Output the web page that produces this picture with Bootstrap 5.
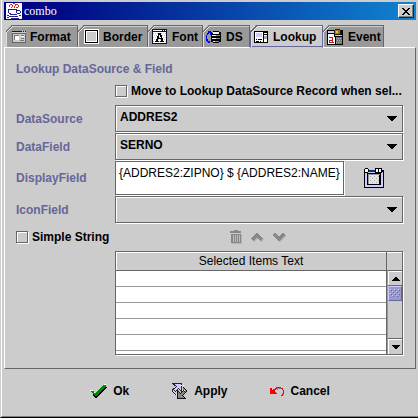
<!DOCTYPE html>
<html lang="en">
<head>
<meta charset="utf-8">
<meta name="viewport" content="width=device-width, initial-scale=1">
<title>combo</title>
<link href="https://cdn.jsdelivr.net/npm/bootstrap@5.3.0/dist/css/bootstrap.min.css" rel="stylesheet">
<style>
:root { --face: #ccc; --edge: #666; --ink: #669; --shade: #999; }
body { background: var(--face); color: #000; font: 700 12px/16px "Liberation Sans", Arial, sans-serif; }
svg { display: block; flex: none; shape-rendering: crispEdges; }
button, select, input, textarea { font: inherit; color: inherit; border-radius: 0; }
.dialog { min-height: 100vh; border-left: 1px solid var(--face); border-bottom: 1px solid #000; }
.frame { border-left: 1px solid #fff; border-bottom: 1px solid #808080; padding: 2px 2px 0; }
.titlebar { height: 18px; gap: 2px; background: linear-gradient(90deg, #000080 0%, #000c88 15%, #1084d0 100%); color: #fff; font: 400 12px/18px "Liberation Serif", serif; padding: 0 2px; }
.close-btn { width: 16px; height: 14px; padding: 0; background: var(--face); border: 1px solid; border-color: #fff #222 #222 #fff; box-shadow: inset -1px -1px 0 #808080; }
.tabs { padding: 5px 0 0 2px; }
.tab { position: relative; height: 22px; padding: 0 0 0 6px; gap: 4px; background: var(--shade); border: 0; border-top: 1px solid var(--edge); border-right: 1px solid var(--edge); box-shadow: inset 0 1px 0 var(--face); clip-path: polygon(0 6px, 6px 0, 100% 0, 100% 100%, 0 100%); white-space: nowrap; }
.tab::before { content: ""; position: absolute; left: 0; top: -1px; width: 7px; height: 7px; background: linear-gradient(135deg, transparent 42%, var(--edge) 42% 53%, #eee 53% 64%, transparent 64%); }
.tab::after { content: ""; position: absolute; left: 0; top: 6px; bottom: 0; width: 1px; background: #ddd; }
.tab.active { height: 23px; margin-bottom: -1px; background: var(--face); border: 1px solid var(--ink); border-top-color: var(--edge); border-bottom-color: var(--face); box-shadow: inset 0 1px 0 #fff, inset 1px 0 0 #fff, inset 0 -1px 0 var(--ink); }
.t-format { width: 72px; } .t-border { width: 70px; } .t-font { width: 55px; } .t-ds { width: 47px; } .t-lookup { width: 73px; } .t-event { width: 61px; }
.tab.t-font, .tab.t-event { padding-left: 4px; gap: 5px; }
.tab.t-ds, .tab.t-lookup { padding-left: 3px; gap: 5px; }
.panel { border: 1px solid; border-color: #fff var(--edge) var(--edge) #fff; padding: 13px 12px 13px 11px; }
.ink { color: var(--ink); }
.option-row { margin: 6px 0 6px 99px; gap: 4px; }
.form-rows { display: grid; grid-template-columns: 99px minmax(0, 1fr); row-gap: 1px; align-items: center; }
.bevel { border: 1px solid var(--edge); box-shadow: inset 1px 1px 0 #fff, 1px 1px 0 #fff; }
.combo { position: relative; }
.combo select { display: block; width: 100%; height: 27px; appearance: none; background: var(--face); padding: 0 24px 3px 4px; }
.combo svg { position: absolute; right: 6px; top: 11px; pointer-events: none; }
.tick { appearance: none; flex: none; width: 12px; height: 12px; margin: 0; background: var(--face); }
.display { display: block; width: 229px; height: 34px; padding: 3px; font-weight: 400; line-height: 16px; resize: none; overflow: hidden; white-space: nowrap; background: #fff; }
.plain-btn { display: flex; align-items: center; padding: 0; border: 0; background: none; }
.string-row { padding: 6px 0 6px; }
.list-tools { width: 173px; }
.list-box { margin-left: 99px; height: 104px; background: var(--face); }
.rows { width: 100%; border-collapse: separate; border-spacing: 0; table-layout: fixed; }
.rows th { height: 19px; padding: 0; font-weight: 400; line-height: 18px; text-align: center; background: var(--face); border-bottom: 1px solid var(--edge); box-shadow: inset 1px 1px 0 #fff; }
.rows td { height: 16px; padding: 0; background: #fff; border-bottom: 1px solid var(--shade); }
.viewport-box { overflow: hidden; background: #fff; }
.side { width: 16px; border-left: 1px solid var(--edge); padding-top: 18px; }
.bar { border-left: 1px solid var(--shade); border-top: 1px solid var(--edge); }
.bar button { display: flex; align-items: center; justify-content: center; height: 15px; width: 100%; padding: 0; background: var(--face); border: 1px solid #fff; border-right: 0; border-bottom: 0; }
.bar .down { box-shadow: 0 -1px 0 var(--edge); }
.thumb { height: 15px; background: #99c; border: 1px solid var(--ink); border-top-color: #ccf; border-left-color: #ccf; box-shadow: 0 -1px 0 var(--ink); }
.actions { height: 44px; gap: 42px; }
.actions button { gap: 6px; }
</style>
<script src="https://cdn.jsdelivr.net/npm/bootstrap@5.3.0/dist/js/bootstrap.bundle.min.js"></script>
</head>
<body>
<main class="dialog d-flex flex-column">
<div class="frame flex-grow-1 d-flex flex-column">
  <header class="titlebar d-flex align-items-center">
    <svg width="16" height="16" viewBox="0 0 16 16"><path fill="#fff" d="M0 0h16v16H0z"/><path fill="#e02020" d="M4 1h2v1H4zM7 0h2v1H7zM10 1h2v1h-2zM3 2h1v2H3zM6 2h1v2H6zM9 1h1v2H9zM12 2h1v2h-1zM5 4h1v1H5zM8 3h1v2H8zM10 4h2v1h-2z"/><path fill="#228" d="M2 6h9v1H2zM2 7h1v3H2zM11 7h3v1h-3zM14 8h1v2h-1zM10 7h1v3h-1zM11 10h3v1h-3zM3 10h2v1H3zM4 11h7v1H4zM1 12h2v1H1zM3 13h9v1H3zM13 12h2v1h-2zM1 14h2v1H1zM5 15h8v1H5z"/></svg>
    <span class="flex-grow-1">combo</span>
    <button class="close-btn d-flex align-items-center justify-content-center" aria-label="Close"><svg width="8" height="7" viewBox="0 0 8 7"><path d="M0 0h2v1H0zM6 0h2v1H6zM1 1h2v1H1zM5 1h2v1H5zM2 2h4v1H2zM3 3h2v1H3zM2 4h4v1H2zM1 5h2v1H1zM5 5h2v1H5zM0 6h2v1H0zM6 6h2v1H6z"/></svg></button>
  </header>
  <nav class="tabs d-flex" role="tablist">
    <button class="tab t-format d-flex align-items-center" role="tab"><svg width="14" height="12" viewBox="0 0 14 12"><path fill="#ccc" d="M0 0h14v12H0z"/><path fill="#00f" d="M0 0h10v1H0zM11 0h1v1h-1zM13 0h1v1h-1z"/><path fill="#666" d="M0 2h1v9H0zM0 11h14v1H0zM13 2h1v10h-1zM1 2h12v1H1z"/><path fill="#777" d="M2 4h5v1H2zM2 4h1v5H2zM9 4h3v1H9zM9 7h3v1H9zM8 9h4v1H8z"/><path fill="#fff" d="M3 5h4v4H3zM9 5h3v1H9z"/></svg>Format</button>
    <button class="tab t-border d-flex align-items-center" role="tab"><svg width="15" height="15" viewBox="0 0 15 15"><path fill="#fff" d="M0 0h15v15H0z"/><path d="M1 1h13v13H1z"/><path fill="#fff" d="M2 2h11v11H2z"/><path fill="#ccc" d="M3 3h9v9H3z"/></svg>Border</button>
    <button class="tab t-font d-flex align-items-center" role="tab"><svg width="15" height="15" viewBox="0 0 15 15"><path fill="#112" d="M0 0h15v15H0z"/><path fill="#fff" d="M1 1h9v1H1zM11 1h1v1h-1zM13 1h1v1h-1zM1 3h13v11H1z"/><path fill="none" stroke="#bcb" stroke-dasharray="1 1" d="M1 4.500h13M2 6.500h12M1 8.500h13M2 10.500h12M1 12.500h13"/><path d="M6 4h3v2h1v3h1v3h1v1H8v-1h1v-2H6v2h1v1H3v-1h1v-2h1V7h1V4m1 2v3h2V8H8V6z"/></svg>Font</button>
    <button class="tab t-ds d-flex align-items-center" role="tab"><svg width="15" height="12" viewBox="0 0 15 12"><path fill="#00f" d="M2 0h3v1h1v1H5v2H4V2H3v1H2v1H1v4h1v2h2v2H2v-1H1v-1H0V4h1V2h1z"/><path d="M7 0h6v1h2v10h-2v1H7v-1H5V2h2z"/><path fill="#eee" d="M7 1h6v2H7zM6 4h7v1H6zM6 7h7v1H6zM7 10h5v1H7z"/><path fill="#888" d="M10 4h4v1h-4zM10 7h4v1h-4zM9 10h4v1H9z"/></svg>DS</button>
    <button class="tab t-lookup active d-flex align-items-center" role="tab" aria-selected="true"><svg width="14" height="12" viewBox="0 0 14 12"><path d="M0 0h14v12H0z"/><path fill="#fff" d="M1 1h8v10H1zM10 2h3v1h-3zM10 4h3v7h-3z"/><path fill="#ccf" d="M2 2h6v4H2z"/><path d="M2 8h1v1H2zM4 8h4v1H4zM2 10h3v1H2zM6 10h1v1H6z"/><path fill="#aaa" d="M10 5h3v3h-3z"/></svg>Lookup</button>
    <button class="tab t-event d-flex align-items-center" role="tab"><svg width="16" height="16" viewBox="0 0 16 16"><path d="M0 1h16v15H0z"/><path fill="#ccf" d="M1 2h7v2H1z"/><path fill="#fff" d="M1 5h6v3H1zM1 8h7v7H1z"/><path fill="#ccf" d="M8 6h7v1H8z"/><path fill="#777" d="M9 8h6v7H9z"/><path stroke="#aaa" stroke-dasharray="1 1" d="M9 9.500h6M10 11.500h5M9 13.500h6"/><path fill="#a22" d="M2 8h4v1H2zM5 9h1v4h1v1H2v-3h3z"/><path fill="#fff" d="M3 12h2v1H3z"/><path fill="#221" d="M8 0h5v1h1v4h-1v1H8V5H7V1h1z"/><path fill="#d63" d="M8 1h2v4H8z"/><path fill="#781" d="M10 1h3v4h-3z"/><path fill="#fb2" d="M9 2h2v2H9z"/></svg>Event</button>
  </nav>
  <section class="panel">
    <div class="ink">Lookup DataSource &amp; Field</div>
    <div class="option-row d-flex align-items-center"><input class="tick bevel" type="checkbox" id="move"><label for="move" class="text-nowrap">Move to Lookup DataSource Record when sel...</label></div>
    <div class="form-rows">
      <label class="ink" for="source">DataSource</label>
      <div class="combo"><select class="bevel" id="source"><option>ADDRES2</option></select><svg width="10" height="5" viewBox="0 0 10 5"><path d="M0 0h10v1H9v1H8v1H7v1H6v1H4V4H3V3H2V2H1V1H0z"/></svg></div>
      <label class="ink" for="field">DataField</label>
      <div class="combo"><select class="bevel" id="field"><option>SERNO</option></select><svg width="10" height="5" viewBox="0 0 10 5"><path d="M0 0h10v1H9v1H8v1H7v1H6v1H4V4H3V3H2V2H1V1H0z"/></svg></div>
      <label class="ink" for="display">DisplayField</label>
      <div class="d-flex align-items-center">
        <textarea class="display bevel" id="display" rows="1" spellcheck="false">{ADDRES2:ZIPNO} $ {ADDRES2:NAME}</textarea>
        <button class="plain-btn mx-auto" aria-label="Edit display field"><svg width="20" height="20" viewBox="0 0 20 20"><path d="M0 2h20v18H0z"/><path fill="#ccf" d="M1 4h18v15H1z"/><path d="M1 0h3v1h1v3H4v1H1V4H0V1h1zM11 0h7v5h-7zM3 5h14v12H3z"/><path fill="#fff" d="M1 1h3v3H1zM12 1h2v3h-2zM15 1h2v3h-2z"/><path fill="#036" d="M5 2h6v2H5z"/><path fill="#e4e4e4" d="M5 7h10v9H5z"/><path fill="#999" d="M4 6h12v1H4zM4 7h1v9H4z"/><path stroke="#aaa" stroke-dasharray="1 3" d="M6 8.500h9M8 10.500h7M6 12.500h9M8 14.500h7"/></svg></button>
      </div>
      <label class="ink" for="icon">IconField</label>
      <div class="combo"><select class="bevel" id="icon"><option></option></select><svg width="10" height="5" viewBox="0 0 10 5"><path d="M0 0h10v1H9v1H8v1H7v1H6v1H4V4H3V3H2V2H1V1H0z"/></svg></div>
    </div>
    <div class="string-row d-flex align-items-center">
      <div class="d-flex align-items-center gap-1 flex-grow-1"><input class="tick bevel" type="checkbox" id="simple"><label for="simple">Simple String</label></div>
      <div class="list-tools d-flex align-items-center gap-2">
        <button class="plain-btn" aria-label="Delete"><svg width="13" height="14" viewBox="0 0 13 14"><path fill="#b4b4b4" d="M2 4h10v10H2z"/><path fill="#888" d="M4 0h4v1h3v2H0V1h4zM1 4h10v9H1z"/><path stroke="#bbb" d="M3.500 5v7M5.500 5v7M7.500 5v7M9.500 5v7"/></svg></button>
        <button class="plain-btn" aria-label="Move up"><svg width="14" height="10" viewBox="0 0 14 10"><path fill="none" stroke="#b4b4b4" stroke-width="3" d="m2 9 5-5 5 5"/><path fill="none" stroke="#888" stroke-width="3" d="m1 8 5-5 5 5"/></svg></button>
        <button class="plain-btn" aria-label="Move down"><svg width="14" height="10" viewBox="0 0 14 10"><path fill="none" stroke="#b4b4b4" stroke-width="3" d="m2 3 5 5 5-5"/><path fill="none" stroke="#888" stroke-width="3" d="m1 2 5 5 5-5"/></svg></button>
      </div>
    </div>
    <div class="list-box bevel d-flex">
      <div class="viewport-box flex-grow-1">
        <table class="rows"><thead><tr><th scope="col">Selected Items Text</th></tr></thead>
        <tbody><tr><td></td></tr><tr><td></td></tr><tr><td></td></tr><tr><td></td></tr><tr><td></td></tr></tbody></table>
      </div>
      <div class="side d-flex flex-column">
        <div class="bar flex-grow-1 d-flex flex-column">
          <button aria-label="Scroll up"><svg width="8" height="4" viewBox="0 0 8 4"><path d="M3 0h2v1h1v1h1v1h1v1H0V3h1V2h1V1h1z"/></svg></button>
          <div class="thumb"><svg width="12" height="12" viewBox="0 0 12 12"><path stroke="#ccf" stroke-dasharray="1 3" d="M1 2.500h10M3 4.500h8M1 6.500h10M3 8.500h8"/><path stroke="#669" stroke-dasharray="1 3" d="M2 3.500h9M4 5.500h7M2 7.500h9M4 9.500h7"/></svg></div>
          <button class="down mt-auto" aria-label="Scroll down"><svg width="8" height="4" viewBox="0 0 8 4"><path d="M0 0h8v1H7v1H6v1H5v1H3V3H2V2H1V1H0z"/></svg></button>
        </div>
      </div>
    </div>
  </section>
  <footer class="actions d-flex align-items-center justify-content-center">
    <button class="plain-btn"><svg width="17" height="14" viewBox="0 0 17 14"><path fill="#fff" d="M0 6h3l2 3 9-9h2v2L6 13z"/><path d="M3 10h1v1h1v1h2v-1h1v-1h1V9h1V8h1V7h1V6h1V5h1V4h1V3h2v1h-1v1h-1v1h-1v1h-1v1h-1v1h-1v1h-1v1h-1v1H8v1H7v1H5v-1H4v-1H3z"/><path fill="#080" d="M1 7h3v2h2V8h1V7h1V6h1V5h1V4h1V3h1V2h1V1h3v2h-1v1h-1v1h-1v1h-1v1h-1v1h-1v1H9v1H8v1H7v1H5v-1H4v-1H3V9H2V8H1z"/></svg>Ok</button>
    <button class="plain-btn"><svg width="17" height="18" viewBox="0 0 17 18"><path fill="#ccf" stroke="#223" d="M1.500 1.500h9v8l-3-3-3 3-2-2 3-3zM3 6 1 9l4 4"/><path fill="#888" stroke="#111" d="M14.500 16.500h-8v-8l3 3 3-3 2 2-3 3zM12 5l4 4-3 3"/><path stroke="#fff" stroke-dasharray="1 1" d="M10 3.500h3M3 12.500h3M11 8.500h3"/></svg>Apply</button>
    <button class="plain-btn"><svg width="15" height="11" viewBox="0 0 15 11"><path fill="#888" d="M7 2h4v1H8v1H7zM13 4h1v5h-2v1h-1V9h1V7h1z"/><path fill="red" d="M0 2h2v2h1V3h2V2h1V1h5v1h2v2h1v4h-1v2h-2V9h1V8h1V4h-1V3h-1V2H7v1H6v1H5v2h1v1h1v1H0z"/></svg><span>Cancel</span></button>
  </footer>
</div>
</main>
</body>
</html>
